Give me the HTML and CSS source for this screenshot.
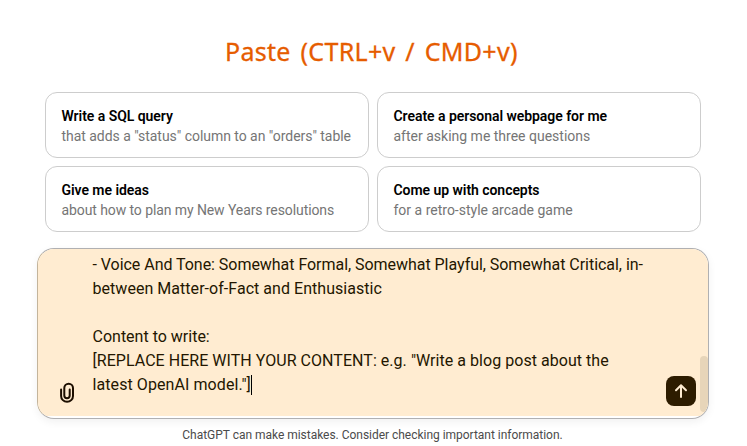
FILE: index.html
```html
<!DOCTYPE html>
<html lang="en">
<head>
<meta charset="utf-8">
<title>ChatGPT</title>
<link rel="stylesheet" href="styles.css">
</head>
<body>
<main class="page">
  <h1 class="heading">Paste (CTRL+v / CMD+v)</h1>
  <section class="suggestions">
    <article class="card"><h2 class="card-title">Write a SQL query</h2><p class="card-text snug">that adds a "status" column to an "orders" table</p></article>
    <article class="card"><h2 class="card-title">Create a personal webpage for me</h2><p class="card-text">after asking me three questions</p></article>
    <article class="card"><h2 class="card-title">Give me ideas</h2><p class="card-text snugger">about how to plan my New Years resolutions</p></article>
    <article class="card"><h2 class="card-title">Come up with concepts</h2><p class="card-text">for a retro-style arcade game</p></article>
  </section>
  <section class="composer">
    <div class="field">
      <svg class="clip" width="24" height="24" viewBox="0 0 24 24" fill="none"><path d="M6.1 8.4V14.9A5.95 5.95 0 0 0 18 14.9V7.1A4.35 4.35 0 0 0 9.3 7.1V14.5A2.7 2.7 0 0 0 14.7 14.5V8.4" stroke="currentColor" stroke-width="2" stroke-linecap="round"/></svg>
      <div class="prompt">
        <p class="line tight">- Voice And Tone: Somewhat Formal, Somewhat Playful, Somewhat Critical, in-</p>
        <p class="line open">between Matter-of-Fact and Enthusiastic</p>
        <p class="line blank"></p>
        <p class="line">Content to write:</p>
        <p class="line open">[REPLACE HERE WITH YOUR CONTENT: e.g. "Write a blog post about the</p>
        <p class="line wide">latest OpenAI model."]<span class="caret"></span></p>
      </div>
      <button class="send" aria-label="Send"><svg width="24" height="24" viewBox="0 0 24 24" fill="none"><path d="M12 18V6.5M7 11.2L12 6.2L17 11.2" stroke="currentColor" stroke-width="2" stroke-linecap="round" stroke-linejoin="round"/></svg></button>
      <div class="scroll-thumb"></div>
    </div>
  </section>
  <footer class="note">ChatGPT can make mistakes. Consider checking important information.</footer>
</main>
</body>
</html>
```
FILE: styles.css
```css
* { box-sizing: border-box; margin: 0; }
body { background: #fff; font-family: Roboto, "Liberation Sans", sans-serif; color: #000; overflow: hidden; }
.page { width: 747px; height: 446px; display: flex; flex-direction: column; }
.heading { height: 92px; padding: 31px 0 0 225px; font: 400 25px/40px "Noto Sans", sans-serif; -webkit-text-stroke: .3px #e65c00; letter-spacing: .3px; word-spacing: 3px; color: #e65c00; white-space: nowrap; }
.suggestions { display: grid; grid-template-columns: 324px 324px; grid-auto-rows: 66px; gap: 8px; margin-left: 45px; }
.card { border: 1px solid #cdcdcd; border-radius: 12px; padding: 13px 15px 11px 15.5px; white-space: nowrap; }
.card-title { font-size: 14px; line-height: 20px; font-weight: 600; letter-spacing: -.05px; }
.card-text { font-size: 14px; line-height: 20px; color: #757575; }
.snug { letter-spacing: -.04px; }
.snugger { letter-spacing: -.09px; }
.composer { width: 672px; height: 171px; margin: 16px 0 0 37px; padding-bottom: 2px; border: 1px solid #b0b0b2; border-left-color: #c3b49b; border-radius: 17px; overflow: hidden; box-shadow: 0 3px 8px rgba(0, 0, 0, .06); background: #fff; }
.field { height: 167px; display: flex; align-items: flex-end; background: #ffecd1; color: #231600; }
.clip { margin: 0 13.5px 11px 17px; color: #1c0e00; flex: none; }
.prompt { width: 573.5px; height: 163px; white-space: nowrap; align-self: flex-end; }
.line { height: 24px; font-size: 16px; line-height: 24px; }
.tight { letter-spacing: -.04px; }
.open { letter-spacing: .04px; }
.wide { letter-spacing: .08px; }
.caret { display: inline-block; width: 1px; height: 20px; background: #000; vertical-align: -5px; }
.send { width: 30px; height: 30px; flex: none; display: flex; align-items: center; justify-content: center; padding: 0; margin: 0 4px 10px 0; border: 0; border-radius: 8px; background: #2d1c00; color: #ffecd1; }
.scroll-thumb { width: 8px; height: 56px; flex: none; margin-bottom: 4px; border-radius: 4px; background: #e7d5b9; }
.note { margin-top: 8px; font-size: 12px; line-height: 16px; text-align: center; letter-spacing: -.025px; color: #4b4b4b; padding-right: 2px; }
```
